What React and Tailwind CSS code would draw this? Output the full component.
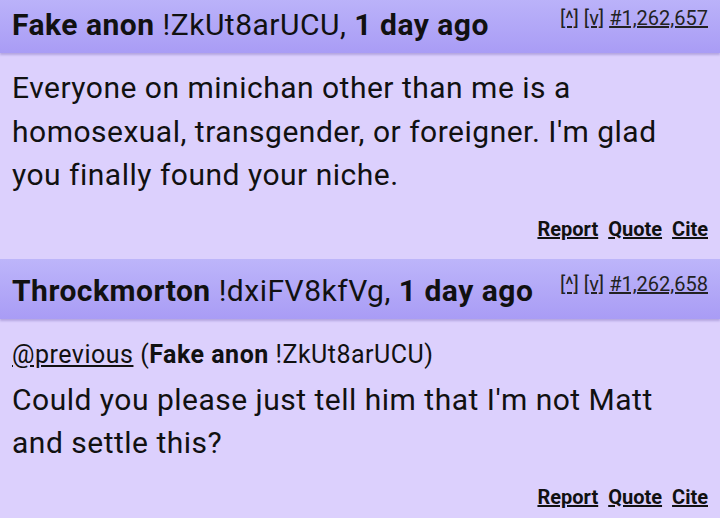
import React from 'react';

const posts = [
    {
        name: 'Fake anon',
        trip: '!ZkUt8arUCU',
        time: '1 day ago',
        num: '#1,262,657',
        body: "Everyone on minichan other than me is a homosexual, transgender, or foreigner. I'm glad you finally found your niche.",
    },
    {
        name: 'Throckmorton',
        trip: '!dxiFV8kfVg',
        time: '1 day ago',
        num: '#1,262,658',
        cite: { name: 'Fake anon', trip: '!ZkUt8arUCU' },
        body: "Could you please just tell him that I'm not Matt and settle this?",
    },
];

function Post({ post, first }) {
    return (
        <div className={first ? 'mt-[-7px]' : 'mt-[2px]'}>
            {/* header bar */}
            <div className="relative z-10 h-[60px] px-3 flex justify-between bg-gradient-to-b from-[#bdb5fa] to-[#a99cf5] shadow-[0_2px_2px_rgba(60,40,140,0.25)]">
                <div className="self-center mt-1 text-[30px] tracking-[0.5px] leading-none whitespace-nowrap text-[#111]">
                    <strong className="font-bold">{post.name}</strong> {post.trip}, <strong className="font-bold">{post.time}</strong>
                </div>
                <div className="pt-[13px] text-[20px] leading-6 text-[#222] whitespace-nowrap">
                    <a href="#" className="underline">[^]</a>{' '}
                    <a href="#" className="underline">[v]</a>{' '}
                    <a href="#" className="underline">{post.num}</a>
                </div>
            </div>
            {/* body */}
            <div className="mt-[2px] bg-[#dcd0fd] px-3 pt-[11px] pb-[14px] text-[#111]">
                {post.cite && (
                    <div className="text-[25px] tracking-[0.5px] leading-[46px]">
                        <a href="#" className="underline">@previous</a> (<strong className="font-bold">{post.cite.name}</strong> {post.cite.trip})
                    </div>
                )}
                <p className="text-[30px] tracking-[0.5px] leading-[43.5px] pr-6">{post.body}</p>
                <div className="mt-[18px] flex justify-end gap-[10px] text-[20px] leading-7 font-bold text-[#111]">
                    <a href="#" className="underline">Report</a>
                    <a href="#" className="underline">Quote</a>
                    <a href="#" className="underline">Cite</a>
                </div>
            </div>
        </div>
    );
}

function App() {
    return (
        <div className="min-h-screen bg-[#dcd0fd] overflow-hidden" style={{ fontFamily: 'Roboto, "Noto Sans", sans-serif' }}>
            {posts.map((p, i) => (
                <Post key={i} post={p} first={i === 0} />
            ))}
        </div>
    );
}

export default App;
